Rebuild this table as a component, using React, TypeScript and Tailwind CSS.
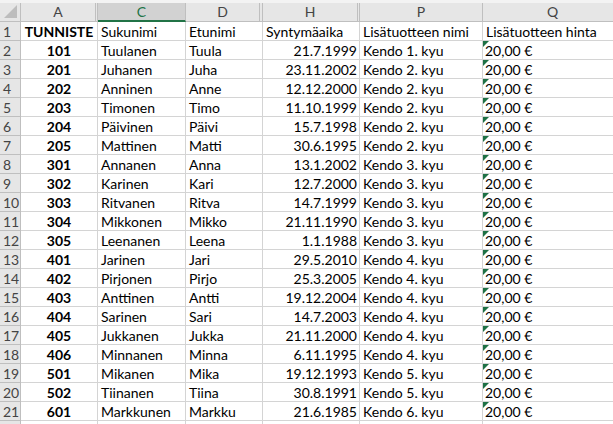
import React from 'react';

const rows: [string, string, string, string, string][] = [
  ['101', 'Tuulanen', 'Tuula', '21.7.1999', 'Kendo 1. kyu'],
  ['201', 'Juhanen', 'Juha', '23.11.2002', 'Kendo 2. kyu'],
  ['202', 'Anninen', 'Anne', '12.12.2000', 'Kendo 2. kyu'],
  ['203', 'Timonen', 'Timo', '11.10.1999', 'Kendo 2. kyu'],
  ['204', 'Päivinen', 'Päivi', '15.7.1998', 'Kendo 2. kyu'],
  ['205', 'Mattinen', 'Matti', '30.6.1995', 'Kendo 2. kyu'],
  ['301', 'Annanen', 'Anna', '13.1.2002', 'Kendo 3. kyu'],
  ['302', 'Karinen', 'Kari', '12.7.2000', 'Kendo 3. kyu'],
  ['303', 'Ritvanen', 'Ritva', '14.7.1999', 'Kendo 3. kyu'],
  ['304', 'Mikkonen', 'Mikko', '21.11.1990', 'Kendo 3. kyu'],
  ['305', 'Leenanen', 'Leena', '1.1.1988', 'Kendo 3. kyu'],
  ['401', 'Jarinen', 'Jari', '29.5.2010', 'Kendo 4. kyu'],
  ['402', 'Pirjonen', 'Pirjo', '25.3.2005', 'Kendo 4. kyu'],
  ['403', 'Anttinen', 'Antti', '19.12.2004', 'Kendo 4. kyu'],
  ['404', 'Sarinen', 'Sari', '14.7.2003', 'Kendo 4. kyu'],
  ['405', 'Jukkanen', 'Jukka', '21.11.2000', 'Kendo 4. kyu'],
  ['406', 'Minnanen', 'Minna', '6.11.1995', 'Kendo 4. kyu'],
  ['501', 'Mikanen', 'Mika', '19.12.1993', 'Kendo 5. kyu'],
  ['502', 'Tiinanen', 'Tiina', '30.8.1991', 'Kendo 5. kyu'],
  ['601', 'Markkunen', 'Markku', '21.6.1985', 'Kendo 6. kyu'],
];

const cell = 'h-[19px] border-r border-b border-[#d4d4d4] flex items-end pb-[1px] overflow-hidden whitespace-nowrap shrink-0';

function RowHead({ n }: { n?: number }) {
  return (
    <div className="w-[21px] h-[19px] shrink-0 bg-[#e6e6e6] border-r border-b border-[#bfbfbf] flex items-end pb-[1px] pl-[3px] text-[#444]">
      {n}
    </div>
  );
}

function Triangle() {
  return (
    <svg className="absolute left-0 top-0" width="6" height="6" viewBox="0 0 6 6">
      <polygon points="0,0 6,0 0,6" fill="#1e7145" />
    </svg>
  );
}

export default function App() {
  return (
    <div
      className="w-[613px] h-[424px] overflow-hidden bg-white text-[14px] leading-none text-black"
      style={{ fontFamily: 'Lato, "Open Sans", sans-serif' }}
    >
      {/* top strip */}
      <div className="h-[3px] bg-[#f3f3f3]" />

      {/* Column headers */}
      <div className="flex h-[19px] bg-[#e6e6e6] text-[#444]">
        <div className="w-[21px] shrink-0 border-r border-b border-[#bfbfbf] relative">
          <svg className="absolute left-[4px] top-[2px]" width="13" height="13" viewBox="0 0 13 13">
            <polygon points="13,0 13,13 0,13" fill="#bdbdbd" />
          </svg>
        </div>
        <div className="w-[77px] shrink-0 flex border-r border-b border-[#bfbfbf]">
          <div className="flex-1 border-r border-[#bfbfbf] mr-[1px] flex items-center justify-center">A</div>
        </div>
        <div className="w-[88px] shrink-0 bg-[#d2d2d2] border-r border-[#bfbfbf] border-b-2 border-b-[#217346] flex items-center justify-center text-[#217346]">
          C
        </div>
        <div className="w-[77px] shrink-0 flex border-r border-b border-[#bfbfbf]">
          <div className="flex-1 border-r border-[#bfbfbf] mr-[2px] flex items-center justify-center">D</div>
        </div>
        <div className="w-[97px] shrink-0 flex border-r border-b border-[#bfbfbf]">
          <div className="flex-1 border-r border-[#bfbfbf] mr-[1px] flex items-center justify-center">H</div>
        </div>
        <div className="w-[123px] shrink-0 border-r border-b border-[#bfbfbf] flex items-center justify-center">P</div>
        <div className="w-[140px] shrink-0 border-r border-b border-[#bfbfbf] flex items-center justify-center">Q</div>
      </div>

      {/* Row 1 */}
      <div className="flex">
        <RowHead n={1} />
        <div className={`${cell} w-[77px] justify-center font-bold`}>TUNNISTE</div>
        <div className={`${cell} w-[88px] pl-[3px]`}>Sukunimi</div>
        <div className={`${cell} w-[77px] pl-[3px]`}>Etunimi</div>
        <div className={`${cell} w-[97px] pl-[3px]`}>Syntymäaika</div>
        <div className={`${cell} w-[123px] pl-[3px]`}>Lisätuotteen nimi</div>
        <div className={`${cell} w-[140px] pl-[3px]`}>Lisätuotteen hinta</div>
      </div>

      {rows.map((r, i) => (
        <div key={r[0]} className="flex">
          <RowHead n={i + 2} />
          <div className={`${cell} w-[77px] justify-center font-bold`}>{r[0]}</div>
          <div className={`${cell} w-[88px] pl-[3px]`}>{r[1]}</div>
          <div className={`${cell} w-[77px] pl-[3px]`}>{r[2]}</div>
          <div className={`${cell} w-[97px] justify-end pr-[2px]`}>{r[3]}</div>
          <div className={`${cell} w-[123px] pl-[3px]`}>{r[4]}</div>
          <div className={`${cell} w-[140px] pl-[2px] relative`}>
            <Triangle />
            20,00 €
          </div>
        </div>
      ))}

      {/* Row 22 (only its top edge is visible) */}
      <div className="flex">
        <RowHead />
        <div className={`${cell} w-[77px]`} />
        <div className={`${cell} w-[88px]`} />
        <div className={`${cell} w-[77px]`} />
        <div className={`${cell} w-[97px]`} />
        <div className={`${cell} w-[123px]`} />
        <div className={`${cell} w-[140px]`} />
      </div>
    </div>
  );
}
